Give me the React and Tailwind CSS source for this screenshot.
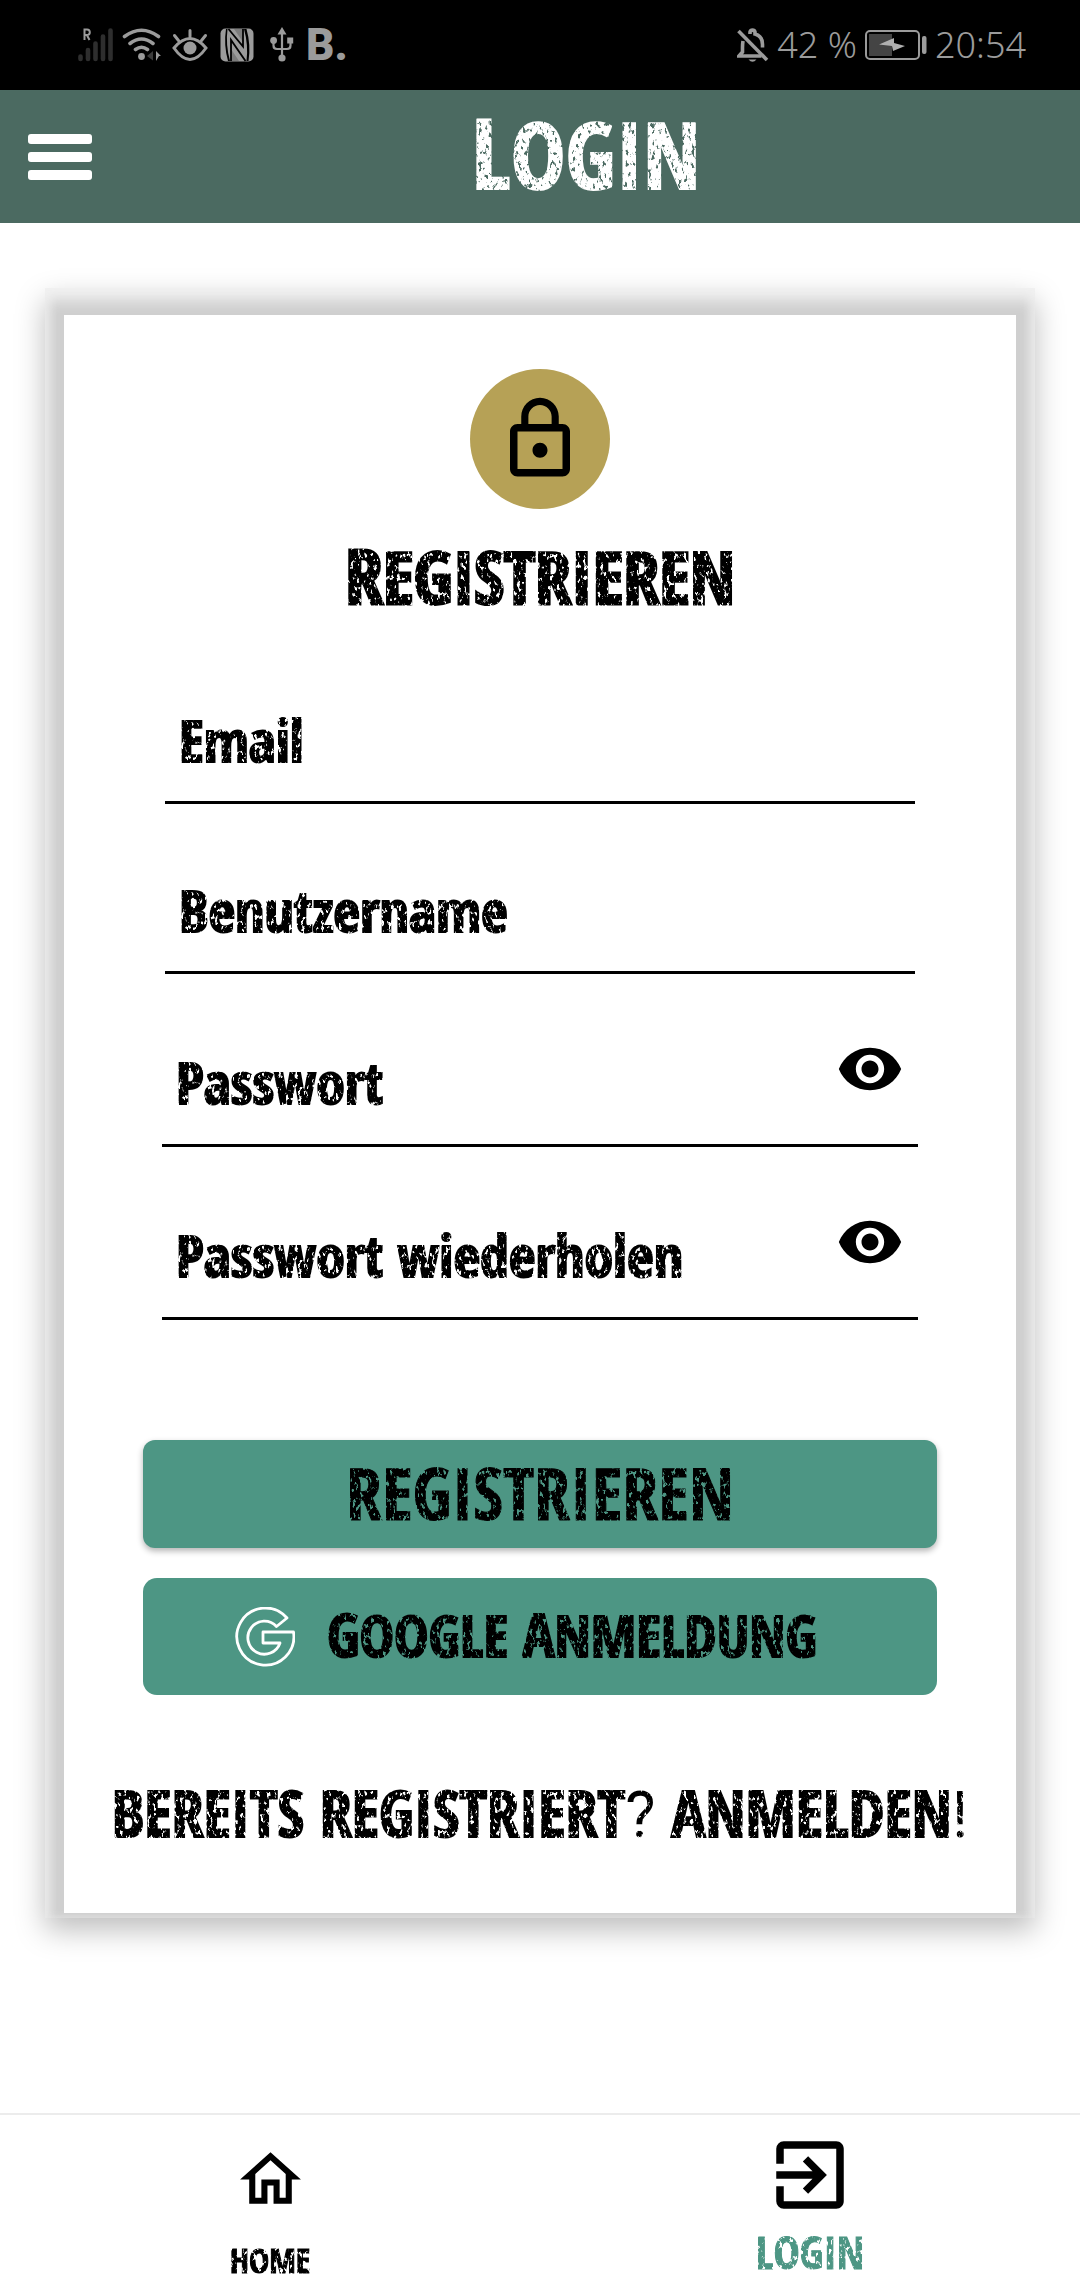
import { useState } from "react";
import { MdLockOutline, MdVisibility, MdOutlineHome, MdExitToApp } from "react-icons/md";

/* Worn-ink texture applied to the display lettering. */
function GrungeFilter() {
  return (
    <svg width="0" height="0" className="absolute" aria-hidden="true">
      <filter id="grunge" x="0" y="0" width="100%" height="100%">
        <feTurbulence type="fractalNoise" baseFrequency="0.3 0.18" numOctaves="3" seed="7" result="noise" />
        <feColorMatrix in="noise" type="matrix" values="0 0 0 0 0  0 0 0 0 0  0 0 0 0 0  -9 0 0 0 6.3" result="mask" />
        <feComposite in="SourceGraphic" in2="mask" operator="in" />
      </filter>
    </svg>
  );
}

function StatusBar() {
  return (
    <div className="flex h-[90px] items-center justify-between bg-black pl-[78px] pr-[54px] text-[#9b9b9b]">
      <div className="flex items-center gap-2">
        <svg width="36" height="34" viewBox="0 0 36 34" aria-hidden="true">
          <g stroke="#2e2e2e" strokeWidth="4.6" strokeLinecap="round">
            <path d="M2.5 28.5v2.5M10 22v9M17.5 15.500v15.500M25 8.500v22.500M32.500 2.500v28.500" />
          </g>
          <path d="M6.500 12V1.500h2.500a2.700 2.700 0 0 1 0 5.600H6.500M9 7.200l2.500 4.800" fill="none" stroke="currentColor" strokeWidth="2" />
        </svg>
        <svg width="40" height="34" viewBox="0 0 40 34" aria-hidden="true">
          <g fill="none" stroke="currentColor" strokeWidth="3.600" strokeLinecap="round">
            <path d="M2.500 8.500Q19.500 -4 36.500 8.500M8 15.500Q19.500 6.500 31 15.500M13.500 21.500Q19.500 17 25.500 21.500" />
          </g>
          <circle cx="19.500" cy="28.500" r="3.400" fill="currentColor" />
          <path d="M31 23v9.500l-6-4.500z" fill="#3a3a3a" />
          <path d="M34 33v-10l5 5h-2z" fill="currentColor" />
        </svg>
        <svg width="36" height="34" viewBox="0 0 36 34" className="ml-0.5" aria-hidden="true">
          <g fill="none" stroke="currentColor" strokeWidth="3" strokeLinecap="round">
            <path d="M2 20Q18 1 34 20Q18 43 2 20ZM18 2.500v6M2.500 7.500l4 5M33.500 7.500l-4 5" />
          </g>
          <circle cx="18" cy="20" r="6.500" fill="currentColor" />
        </svg>
        <svg width="34" height="34" viewBox="0 0 34 34" className="ml-1" aria-hidden="true">
          <rect x="0.500" y="0.500" width="33" height="33" rx="5" fill="currentColor" />
          <path d="M7.500 1Q5.500 17 10 33H8Q3.500 17 6 1zM26.500 33Q28.500 17 24 1h2.500Q31 17 28.500 33z" fill="#000" />
          <path d="M8.500 1L23 18.500V1M25.500 33L11 12v21" fill="none" stroke="#000" strokeWidth="1.800" />
          <path d="M11 21l8 12h-8zM23 14L14 1h9z" fill="#000" opacity="0.200" />
        </svg>
        <svg width="24" height="36" viewBox="0 0 24 36" className="ml-2" aria-hidden="true">
          <path d="M12 5v25M3.500 14v4.500q0 3.500 3.500 3.500h10q3.500 0 3.500-3.500V14" fill="none" stroke="currentColor" strokeWidth="2.200" />
          <path d="M12 0l4.500 7.500h-9z" fill="currentColor" />
          <circle cx="3.600" cy="13.500" r="3.400" fill="currentColor" />
          <rect x="17.200" y="10.500" width="6" height="6" fill="currentColor" />
          <circle cx="12" cy="31" r="3.600" fill="currentColor" />
        </svg>
        <span className="ml-1 font-['Roboto',sans-serif] text-[44px] leading-none font-black">B.</span>
      </div>
      <div className="flex items-center gap-2 font-['Noto_Sans',sans-serif] text-[36px] leading-none font-light">
        <svg width="32" height="36" viewBox="0 0 32 36" fill="none" stroke="currentColor" strokeWidth="3.600" aria-hidden="true">
          <path d="M13 7V5a2.600 2.600 0 0 1 5 0V7q7.500 2 7.500 10.500v3M6 14q-.5 3-.5 6.500v4.500L2 29h22.500" />
          <path d="M1.500 4L30 33" />
          <path d="M11.500 32.500h8q-4 4.500-8 0z" fill="currentColor" stroke="none" />
        </svg>
        <span>42 %</span>
        <svg width="62" height="30" viewBox="0 0 62 30" aria-hidden="true">
          <rect x="1" y="1" width="53" height="28" rx="4" fill="none" stroke="currentColor" strokeWidth="2" />
          <rect x="4" y="4" width="23" height="22" fill="#444" />
          <path d="M14 14.500L29 8v5l11 3L28 21l-1-5z" fill="#b0b0b0" />
          <rect x="57" y="6" width="4.500" height="18" rx="2" fill="currentColor" />
        </svg>
        <span>20:54</span>
      </div>
    </div>
  );
}

function Header() {
  return (
    <header className="grid h-[133px] grid-cols-[92px_1fr] items-center bg-[#4b6a61] text-white">
      <button type="button" aria-label="Menü" className="ml-7 flex w-16 flex-col gap-2">
        <span className="h-[10px] rounded-[3px] bg-white" />
        <span className="h-[10px] rounded-[3px] bg-white" />
        <span className="h-[10px] rounded-[3px] bg-white" />
      </button>
      <h1 className="pb-2 text-center text-[92px] leading-[112px] [-webkit-text-stroke:2px_currentColor] [filter:url(#grunge)] first-letter:text-[98px]">
        LOGIN
      </h1>
    </header>
  );
}

const inputClass =
  "h-full w-full min-w-0 flex-1 bg-transparent pr-4 pl-[14px] pt-11 text-[58px] leading-none outline-none [-webkit-text-stroke:2px_currentColor] [filter:url(#grunge)] placeholder:text-black placeholder:opacity-100";

function Field({ label, type = "text", autoComplete }) {
  return (
    <div className="mx-[3px] h-[170px] border-b-[3px] border-black">
      <input type={type} aria-label={label} placeholder={label} autoComplete={autoComplete} className={inputClass} />
    </div>
  );
}

function PasswordField({ label }) {
  const [visible, setVisible] = useState(false);
  return (
    <div className="flex h-[173px] items-center border-b-[3px] border-black pr-[14px]">
      <input
        type={visible ? "text" : "password"}
        aria-label={label}
        placeholder={label}
        autoComplete="new-password"
        className={inputClass}
      />
      <button type="button" aria-label="Passwort anzeigen" onClick={() => setVisible(!visible)} className="mt-5">
        <MdVisibility size={68} />
      </button>
    </div>
  );
}

function GoogleMark() {
  return (
    <svg width="60" height="60" viewBox="0 0 60 60" fill="none" stroke="#fff" strokeWidth="2.800" strokeLinejoin="round" aria-hidden="true">
      <path d="M52 11A28.500 28.500 0 1 0 58.500 25H28v11h17A16.500 16.500 0 1 1 41.500 19.500Z" />
    </svg>
  );
}

function RegisterCard() {
  return (
    <section className="mx-[45px] mt-[65px] bg-[#cfcfcf] px-[19px] pt-[27px] pb-[5px] shadow-[0_12px_28px_rgba(0,0,0,0.26),inset_0_14px_14px_-2px_#f1f1f1,inset_8px_0_10px_-2px_#e4e4e4,inset_-8px_0_10px_-2px_#e4e4e4]">
      <form onSubmit={(e) => e.preventDefault()} className="flex flex-col bg-white pt-[54px] pb-[59px]">
        <div className="mx-auto flex size-[140px] items-center justify-center rounded-full bg-[#b6a156]">
          <MdLockOutline size={90} />
        </div>
        <h2 className="mt-7 text-center text-[72px] leading-[76px] [-webkit-text-stroke:3px_currentColor] [filter:url(#grunge)] first-letter:text-[76px]">
          REGISTRIEREN
        </h2>
        <div className="mx-[98px] mt-5">
          <Field label="Email" type="email" autoComplete="email" />
          <Field label="Benutzername" autoComplete="username" />
          <PasswordField label="Passwort" />
          <PasswordField label="Passwort wiederholen" />
        </div>
        <div className="mx-[79px] mt-[120px] flex flex-col gap-[30px]">
          <button type="submit" className="h-[108px] rounded-[12px] bg-[#4d9684] pb-1 shadow-[0_3px_6px_rgba(0,0,0,0.3)]">
            <span className="block text-[72px] leading-[76px] [-webkit-text-stroke:1px_currentColor] [filter:url(#grunge)]">REGISTRIEREN</span>
          </button>
          <button type="button" className="flex h-[117px] items-center justify-center gap-8 rounded-[14px] bg-[#4d9684] pr-7">
            <GoogleMark />
            <span className="pb-1 text-[58px] leading-[76px] [-webkit-text-stroke:2px_currentColor] [filter:url(#grunge)]">
              <span className="text-[60px]">G</span>OOGLE <span className="text-[60px]">A</span>NMELDUNG
            </span>
          </button>
        </div>
        <a href="#anmelden" className="mt-20 text-center text-[64px] leading-[76px] [-webkit-text-stroke:2px_currentColor] [filter:url(#grunge)]">
          BEREITS REGISTRIERT<span className="font-['Roboto',sans-serif] font-normal [-webkit-text-stroke:0]">?</span> ANMELDEN
          <span className="font-['Roboto',sans-serif] font-normal [-webkit-text-stroke:0]">!</span>
        </a>
      </form>
    </section>
  );
}

function BottomNav() {
  return (
    <nav className="mt-auto grid h-[167px] grid-cols-2 border-t-2 border-[#ececec]">
      <a href="#home" className="flex flex-col items-center justify-end gap-6 text-[34px] leading-10">
        <MdOutlineHome size={73} />
        <span className="[-webkit-text-stroke:1px_currentColor] [filter:url(#grunge)]">HOME</span>
      </a>
      <a href="#login" aria-current="page" className="flex flex-col items-center justify-end gap-2 pb-1 text-[44px] leading-[48px]">
        <MdExitToApp size={90} />
        <span className="text-[#4d9684] [-webkit-text-stroke:1px_currentColor] [filter:url(#grunge)]">LOGIN</span>
      </a>
    </nav>
  );
}

export default function App() {
  return (
    <div className="flex min-h-screen flex-col bg-white font-['Open_Sans_Condensed','Roboto_Condensed','Open_Sans',sans-serif] font-bold text-black">
      <GrungeFilter />
      <StatusBar />
      <Header />
      <main>
        <RegisterCard />
      </main>
      <BottomNav />
    </div>
  );
}
